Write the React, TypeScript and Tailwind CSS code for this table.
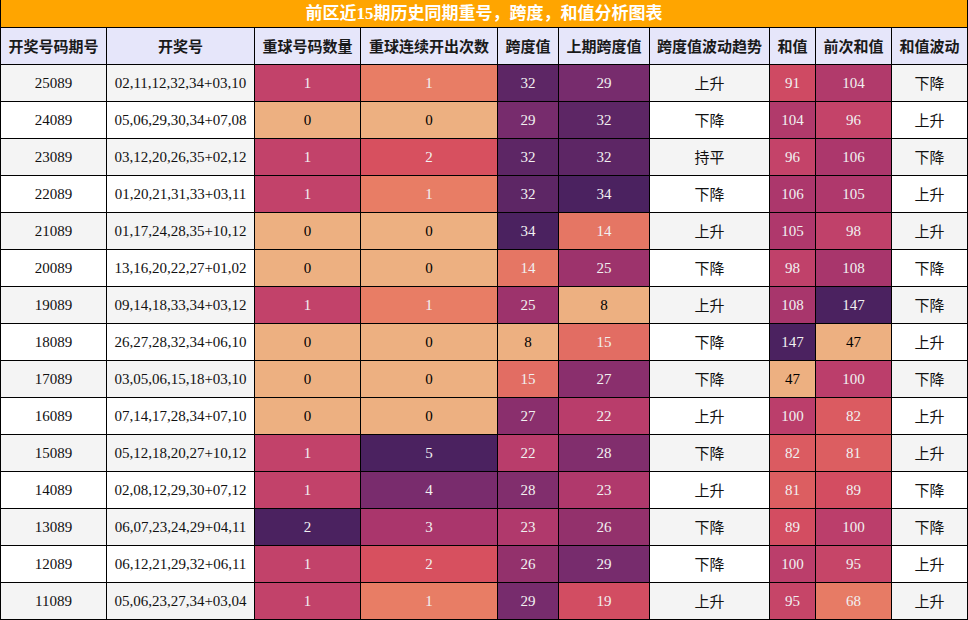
import React from "react";

const rows: [string, string, number, number, number, number, string, number, number, string][] = [
  ["25089", "02,11,12,32,34+03,10", 1, 1, 32, 29, "上升", 91, 104, "下降"],
  ["24089", "05,06,29,30,34+07,08", 0, 0, 29, 32, "下降", 104, 96, "上升"],
  ["23089", "03,12,20,26,35+02,12", 1, 2, 32, 32, "持平", 96, 106, "下降"],
  ["22089", "01,20,21,31,33+03,11", 1, 1, 32, 34, "下降", 106, 105, "上升"],
  ["21089", "01,17,24,28,35+10,12", 0, 0, 34, 14, "上升", 105, 98, "上升"],
  ["20089", "13,16,20,22,27+01,02", 0, 0, 14, 25, "下降", 98, 108, "下降"],
  ["19089", "09,14,18,33,34+03,12", 1, 1, 25, 8, "上升", 108, 147, "下降"],
  ["18089", "26,27,28,32,34+06,10", 0, 0, 8, 15, "下降", 147, 47, "上升"],
  ["17089", "03,05,06,15,18+03,10", 0, 0, 15, 27, "下降", 47, 100, "下降"],
  ["16089", "07,14,17,28,34+07,10", 0, 0, 27, 22, "上升", 100, 82, "上升"],
  ["15089", "05,12,18,20,27+10,12", 1, 5, 22, 28, "下降", 82, 81, "上升"],
  ["14089", "02,08,12,29,30+07,12", 1, 4, 28, 23, "上升", 81, 89, "下降"],
  ["13089", "06,07,23,24,29+04,11", 2, 3, 23, 26, "下降", 89, 100, "下降"],
  ["12089", "06,12,21,29,32+06,11", 1, 2, 26, 29, "下降", 100, 95, "上升"],
  ["11089", "05,06,23,27,34+03,04", 1, 1, 29, 19, "上升", 95, 68, "上升"],
];

const stops: [number, number[]][] = [
  [0.0, [237, 176, 129]],
  [0.2, [232, 125, 101]],
  [0.4, [215, 80, 95]],
  [0.5, [194, 66, 106]],
  [0.6, [170, 54, 108]],
  [0.8, [121, 44, 109]],
  [1.0, [75, 34, 96]],
];

function cmap(t: number): number[] {
  for (let i = 1; i < stops.length; i++) {
    const [t1, c1] = stops[i];
    const [t0, c0] = stops[i - 1];
    if (t <= t1) {
      const f = (t - t0) / (t1 - t0);
      return c0.map((v, k) => Math.round(v + (c1[k] - v) * f));
    }
  }
  return stops[stops.length - 1][1];
}

function lum(c: number[]) {
  const l = c.map((v) => {
    const x = v / 255;
    return x <= 0.03928 ? x / 12.92 : Math.pow((x + 0.055) / 1.055, 2.4);
  });
  return 0.2126 * l[0] + 0.7152 * l[1] + 0.0722 * l[2];
}

function style(v: number, min: number, max: number): React.CSSProperties {
  const c = cmap((v - min) / (max - min));
  return {
    backgroundColor: `rgb(${c[0]},${c[1]},${c[2]})`,
    color: lum(c) < 0.408 ? "#f1f1f1" : "#000000",
  };
}

const gradCols = [2, 3, 4, 5, 7, 8];
const ranges: Record<number, [number, number]> = {};
gradCols.forEach((ci) => {
  const vals = rows.map((r) => r[ci] as number);
  ranges[ci] = [Math.min(...vals), Math.max(...vals)];
});

const headers = [
  "开奖号码期号",
  "开奖号",
  "重球号码数量",
  "重球连续开出次数",
  "跨度值",
  "上期跨度值",
  "跨度值波动趋势",
  "和值",
  "前次和值",
  "和值波动",
];

const gridCls =
  "grid grid-cols-[106px_148px_106px_137px_61px_91px_120px_46px_76px_76px]";

export default function App() {
  return (
    <div
      className="w-[968px] h-[620px] bg-white border-l border-black"
      style={{ fontFamily: '"Liberation Serif", "Noto Sans CJK SC", serif' }}
    >
      <div
        className="h-[28px] bg-[#ffa500] border-r border-b border-black flex items-center justify-center text-white font-bold text-[17px] leading-none"
      >
        前区近15期历史同期重号，跨度，和值分析图表
      </div>
      <div className={`${gridCls} bg-[#e6e6fa]`}>
        {headers.map((h) => (
          <div
            key={h}
            className="h-[37px] border-r border-b border-black flex items-center justify-center font-bold text-[15px] text-[#1a1a1a]"
            style={{ fontFamily: '"Noto Sans CJK SC", sans-serif' }}
          >
            {h}
          </div>
        ))}
      </div>
      {rows.map((r, ri) => (
        <div
          key={r[0]}
          className={`${gridCls} ${ri % 2 === 0 ? "bg-[#f4f4f4]" : "bg-white"}`}
        >
          {r.map((v, ci) => {
            const isGrad = gradCols.includes(ci);
            const isCjk = ci === 6 || ci === 9;
            return (
              <div
                key={ci}
                className="h-[37px] border-r border-b border-black flex items-center justify-center text-[15px] text-[#111]"
                style={{
                  ...(isGrad ? style(v as number, ranges[ci][0], ranges[ci][1]) : {}),
                  ...(isCjk ? { fontFamily: '"Noto Sans CJK SC", sans-serif' } : {}),
                }}
              >
                {v}
              </div>
            );
          })}
        </div>
      ))}
    </div>
  );
}
